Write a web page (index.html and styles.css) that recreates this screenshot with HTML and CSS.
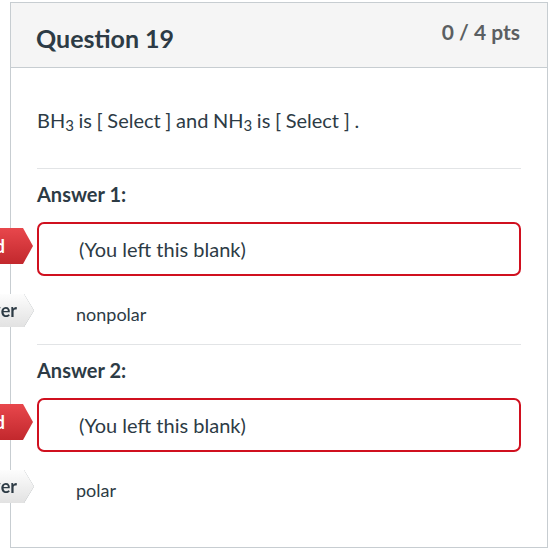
FILE: index.html
```html
<!DOCTYPE html>
<html lang="en">
<head>
<meta charset="utf-8">
<title>Question 19</title>
<link rel="stylesheet" href="styles.css">
</head>
<body>
<div class="page">
  <section class="question">
    <header class="question-header">
      <h2 class="question-title">Question 19</h2>
      <span class="points">0 / 4 pts</span>
    </header>
    <div class="question-body">
      <p class="question-text">BH<sub>3</sub> is [ Select ] and NH<sub>3</sub> is [ Select ] .</p>

      <div class="answer-group">
        <h3 class="answer-label">Answer 1:</h3>
        <div class="answer-row">
          <span class="tag tag-wrong"><span class="tag-face">Unanswered</span></span>
          <div class="answer-box">(You left this blank)</div>
        </div>
        <div class="answer-row correct-row">
          <span class="tag tag-correct"><span class="tag-face">Correct Answer</span></span>
          <div class="answer-text">nonpolar</div>
        </div>
      </div>

      <div class="answer-group">
        <h3 class="answer-label">Answer 2:</h3>
        <div class="answer-row">
          <span class="tag tag-wrong"><span class="tag-face">Unanswered</span></span>
          <div class="answer-box">(You left this blank)</div>
        </div>
        <div class="answer-row correct-row">
          <span class="tag tag-correct"><span class="tag-face">Correct Answer</span></span>
          <div class="answer-text">polar</div>
        </div>
      </div>
    </div>
  </section>
</div>
</body>
</html>
```
FILE: styles.css
```css
html, body {
  margin: 0;
  padding: 0;
  background: #ffffff;
}

body {
  font-family: Lato, "Open Sans", "Liberation Sans", sans-serif;
  color: #2d3b45;
}

.page {
  padding: 2px 0 0 10px;
}

.question {
  width: 536px;
  border: 1px solid #c7cdd1;
  background: #ffffff;
}

.question-header {
  display: flex;
  justify-content: space-between;
  align-items: flex-start;
  background: #f5f5f5;
  border-bottom: 1px solid #c7cdd1;
  padding: 20px 27px 14px 25px;
}

.question-title {
  margin: 0;
  font-size: 25px;
  line-height: 30px;
  font-weight: 700;
  color: #2d3b45;
}

.points {
  font-size: 21px;
  line-height: 18px;
  font-weight: 700;
  color: #5b5f62;
}

.question-body {
  padding: 38px 26px 27px 26px;
}

.question-text {
  margin: 0 0 34px 0;
  font-size: 20px;
  line-height: 28px;
  word-spacing: -0.5px;
}

.question-text sub {
  font-size: 15px;
  line-height: 0;
  vertical-align: -3px;
}

.answer-group {
  border-top: 1px solid #e2e4e6;
}

.answer-label {
  margin: 13px 0 16px 0;
  font-size: 20px;
  line-height: 24px;
  font-weight: 700;
}

.answer-row {
  position: relative;
}

.answer-box {
  border: 2px solid #d0101f;
  border-radius: 7px;
  height: 50px;
  line-height: 50px;
  padding-left: 40px;
  font-size: 20px;
}

.correct-row {
  margin: 18px 0 17px 0;
  height: 33px;
}

.answer-text {
  padding-left: 39px;
  font-size: 18px;
  line-height: 33px;
  padding-top: 4px;
}

/* arrow-shaped labels hanging off the left edge of the card */
.tag {
  position: absolute;
  right: calc(100% + 4px);
  white-space: nowrap;
  font-weight: 700;
  font-size: 18px;
}

.tag-face {
  display: block;
  padding: 0 28px 0 12px;
  clip-path: polygon(0 0, calc(100% - 10px) 0, 100% 50%, calc(100% - 10px) 100%, 0 100%);
}

.tag-wrong {
  top: 6px;
}

.tag-wrong .tag-face {
  height: 36px;
  line-height: 36px;
  color: #ffffff;
  background: linear-gradient(#e8474c, #c2282d);
}

.tag-correct {
  top: 0;
  right: calc(100% + 3px);
  filter: drop-shadow(0 0 0.7px #8f979c);
}

.tag-correct .tag-face {
  height: 33px;
  line-height: 33px;
  padding-right: 17px;
  color: #2d3b45;
  background: linear-gradient(#fdfdfd, #e2e2e2);
}
```
